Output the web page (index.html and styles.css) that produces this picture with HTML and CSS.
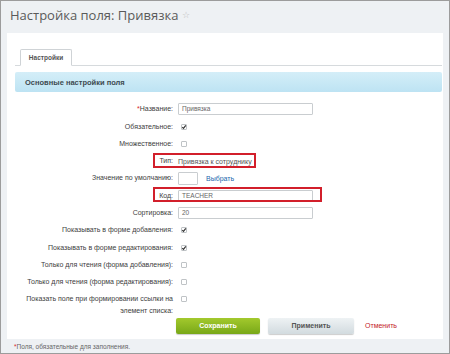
FILE: index.html
```html
<!DOCTYPE html>
<html lang="ru">
<head>
<meta charset="utf-8">
<link rel="stylesheet" href="styles.css">
</head>
<body>
<div class="frame">
  <div class="title">Настройка поля: Привязка <span class="star">☆</span></div>
  <div class="panel">
    <div class="tabs"><div class="tab">Настройки</div></div>
    <div class="section">Основные настройки поля</div>
    <div class="form">
      <div class="row"><div class="label"><span class="req">*</span>Название:</div><div class="value"><div class="input">Привязка</div></div></div>
      <div class="row"><div class="label">Обязательное:</div><div class="value"><span class="cb checked"><svg viewBox="0 0 6 6"><path d="M1.3 3.1 L2.5 4.4 L4.8 1.4"/></svg></span></div></div>
      <div class="row"><div class="label">Множественное:</div><div class="value"><span class="cb"></span></div></div>
      <div class="row"><span class="mark mark-type"></span><div class="label">Тип:</div><div class="value"><span class="text">Привязка к сотруднику</span></div></div>
      <div class="row"><div class="label">Значение по умолчанию:</div><div class="value"><div class="input small"></div><a class="link">Выбрать</a></div></div>
      <div class="row"><span class="mark mark-code"></span><div class="label">Код:</div><div class="value"><div class="input">TEACHER</div></div></div>
      <div class="row"><div class="label">Сортировка:</div><div class="value"><div class="input">20</div></div></div>
      <div class="row"><div class="label">Показывать в форме добавления:</div><div class="value"><span class="cb checked"><svg viewBox="0 0 6 6"><path d="M1.3 3.1 L2.5 4.4 L4.8 1.4"/></svg></span></div></div>
      <div class="row"><div class="label">Показывать в форме редактирования:</div><div class="value"><span class="cb checked"><svg viewBox="0 0 6 6"><path d="M1.3 3.1 L2.5 4.4 L4.8 1.4"/></svg></span></div></div>
      <div class="row"><div class="label">Только для чтения (форма добавления):</div><div class="value"><span class="cb"></span></div></div>
      <div class="row"><div class="label">Только для чтения (форма редактирования):</div><div class="value"><span class="cb"></span></div></div>
      <div class="row tall"><div class="label">Показать поле при формировании ссылки на<br>элемент списка:</div><div class="value"><span class="cb"></span></div></div>
    </div>
    <div class="buttons">
      <span class="btn save">Сохранить</span>
      <span class="btn apply">Применить</span>
      <a class="cancel">Отменить</a>
    </div>
  </div>
  <div class="note"><span class="req">*</span>Поля, обязательные для заполнения.</div>
</div>
</body>
</html>
```

FILE: styles.css
```css
* { box-sizing: border-box; }
html, body { margin: 0; padding: 0; background: #eef1f4; }
.frame {
  width: 450px;
  height: 354px;
  border: 1px solid #9c9c9c;
  background: #eef1f4;
  font-family: "Liberation Sans", Arial, sans-serif;
  font-size: 7px;
  color: #3a3a3a;
  overflow: hidden;
}
.title {
  height: 32px;
  padding: 5px 0 0 9px;
  font-family: "Open Sans", sans-serif;
  font-size: 13px;
  line-height: 18px;
  color: #5a5a5a;
}
.star { font-size: 9px; color: #bdbdbd; vertical-align: 2px; }
.panel {
  margin: 0 6px;
  background: #fff;
  padding: 16px 1px 5px 8px;
}
.tabs {
  height: 17px;
  border-bottom: 1px solid #d6dadd;
  padding-left: 5px;
  display: flex;
}
.tab {
  width: 52px;
  height: 17px;
  border: 1px solid #cfd3d6;
  border-bottom-color: #fff;
  border-radius: 2px 2px 0 0;
  background: #fff;
  font-weight: bold;
  font-size: 6.5px;
  color: #555;
  display: flex;
  align-items: center;
  justify-content: center;
}
.section {
  margin-top: 6px;
  height: 20px;
  background: linear-gradient(#d4eef8, #bde3f3);
  border-radius: 2px;
  padding-left: 10px;
  display: flex;
  align-items: center;
  font-weight: bold;
  font-size: 7.5px;
  color: #3d4a50;
}
.form { padding-top: 8.8px; }
.row {
  position: relative;
  height: 17.28px;
  display: flex;
  align-items: center;
}
.row.tall { height: 27px; align-items: flex-start; padding-top: 2px; }
.label {
  width: 158px;
  text-align: right;
  line-height: 12px;
  color: #404040;
}
.req { color: #d9262c; }
.value {
  margin-left: 5px;
  display: flex;
  align-items: center;
}
.row.tall .value { padding-top: 3px; }
.input {
  width: 135px;
  height: 12px;
  border: 1px solid #c9cdd0;
  border-radius: 1px;
  padding-left: 3px;
  font-size: 6.5px;
  line-height: 10px;
  color: #666;
}
.input.small { width: 20px; height: 13px; }
.link { margin-left: 8px; color: #2167ad; font-size: 7px; }
.text { color: #555; }
.cb {
  margin-left: 3px;
  width: 6px;
  height: 6px;
  border: 1px solid #bfc3c6;
  border-radius: 1px;
  background: #fff;
  display: block;
  position: relative;
}
.cb svg { position: absolute; left: -1px; top: -1px; width: 6px; height: 6px; }
.cb path { fill: none; stroke: #333; stroke-width: 1.2; }
.mark {
  position: absolute;
  border: 2px solid #d21f2b;
  left: 138px;
  top: 0;
  height: 15px;
}
.mark-type { width: 103px; }
.mark-code { width: 169px; }
.buttons {
  height: 16px;
  padding-left: 161px;
  display: flex;
  align-items: center;
}
.btn {
  height: 16px;
  border-radius: 2px;
  display: flex;
  align-items: center;
  justify-content: center;
  font-weight: bold;
  font-size: 7px;
}
.save {
  width: 84px;
  background: linear-gradient(#a3c92d, #78a818);
  color: #fff;
  box-shadow: 0 1px 1px rgba(0,0,0,0.2);
}
.apply {
  width: 86px;
  margin-left: 8px;
  background: linear-gradient(#eef2f4, #d2dbdf);
  color: #555;
  box-shadow: 0 1px 1px rgba(0,0,0,0.2);
}
.cancel { margin-left: 11px; color: #c3222a; }
.note {
  padding: 4px 0 0 13px;
  font-size: 6.5px;
  color: #666;
}
```
